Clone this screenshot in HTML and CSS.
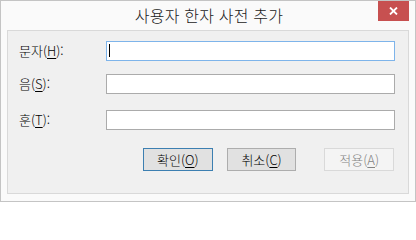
FILE: index.html
```html
<!DOCTYPE html>
<html lang="ko">
<head>
<meta charset="utf-8">
<title>사용자 한자 사전 추가</title>
<link rel="stylesheet" href="styles.css">
</head>
<body>
<div class="window">
  <div class="titlebar">
    <span></span>
    <div class="title">사용자 한자 사전 추가</div>
    <button class="close" aria-label="닫기">
      <svg width="9" height="8" viewBox="0 0 9 8"><path d="M1 0.5 L8 7.5 M8 0.5 L1 7.5" stroke="#fff" stroke-width="1.8"/></svg>
    </button>
  </div>
  <div class="client">
    <div class="row row-1">
      <label class="label">문자(<u>H</u>):</label>
      <div class="input focused"><span class="caret"></span></div>
    </div>
    <div class="row row-2">
      <label class="label">음(<u>S</u>):</label>
      <div class="input"></div>
    </div>
    <div class="row row-3">
      <label class="label">훈(<u>T</u>):</label>
      <div class="input"></div>
    </div>
    <div class="buttons">
      <button class="btn default">확인(<u>O</u>)</button>
      <button class="btn">취소(<u>C</u>)</button>
      <button class="btn disabled">적용(<u>A</u>)</button>
    </div>
  </div>
</div>
</body>
</html>
```
FILE: styles.css
```css
* { box-sizing: border-box; }
html, body { margin: 0; padding: 0; background: #ffffff; }
body { font-family: "Noto Sans CJK KR", "Noto Sans", sans-serif; }

.window {
  width: 416px;
  height: 202px;
  border: 1px solid #c4c4c4;
  background: #fafafa;
  display: flex;
  flex-direction: column;
}

.titlebar {
  height: 29px;
  display: grid;
  grid-template-columns: 1fr auto 1fr;
  align-items: start;
}
.title {
  font-size: 16px;
  font-weight: 300;
  line-height: 29px;
  color: #1a1a1a;
  letter-spacing: 0.2px;
  padding-left: 2px;
}
.close {
  justify-self: end;
  margin-right: 6px;
  width: 31px;
  height: 20px;
  border: 0;
  padding: 0;
  background: #c75050;
  display: flex;
  align-items: center;
  justify-content: center;
}

.client {
  flex: 1;
  margin: 0 6px 7px 6px;
  border: 1px solid #d9d9d9;
  background: #f0f0f0;
  font-size: 13px;
  color: #000;
}

.row {
  display: flex;
  align-items: center;
  padding-left: 11px;
}
.row-1 { margin-top: 10px; }
.row-2 { margin-top: 13px; }
.row-3 { margin-top: 16px; }

.label {
  width: 87px;
  line-height: 20px;
  font-weight: 300;
}
.label u, .btn u { text-decoration-thickness: 1px; text-underline-offset: 2px; }

.input {
  width: 289px;
  height: 20px;
  background: #fff;
  border: 1px solid #ababab;
  position: relative;
}
.input.focused { border-color: #7eb4ea; }
.caret {
  position: absolute;
  left: 2px;
  top: 2px;
  width: 1px;
  height: 13px;
  background: #000;
}

.buttons {
  display: flex;
  padding-left: 135px;
  margin-top: 18px;
}
.btn {
  width: 70px;
  height: 23px;
  padding: 0;
  font-family: inherit;
  font-size: 13px;
  font-weight: 300;
  color: #000;
  background: #e1e1e1;
  border: 1px solid #adadad;
  margin-right: 14px;
}
.btn.default { border-color: #3c7fb1; }
.btn.disabled {
  margin-left: 14px;
  background: #f4f4f4;
  border-color: #d9d9d9;
  color: #838383;
}
```
